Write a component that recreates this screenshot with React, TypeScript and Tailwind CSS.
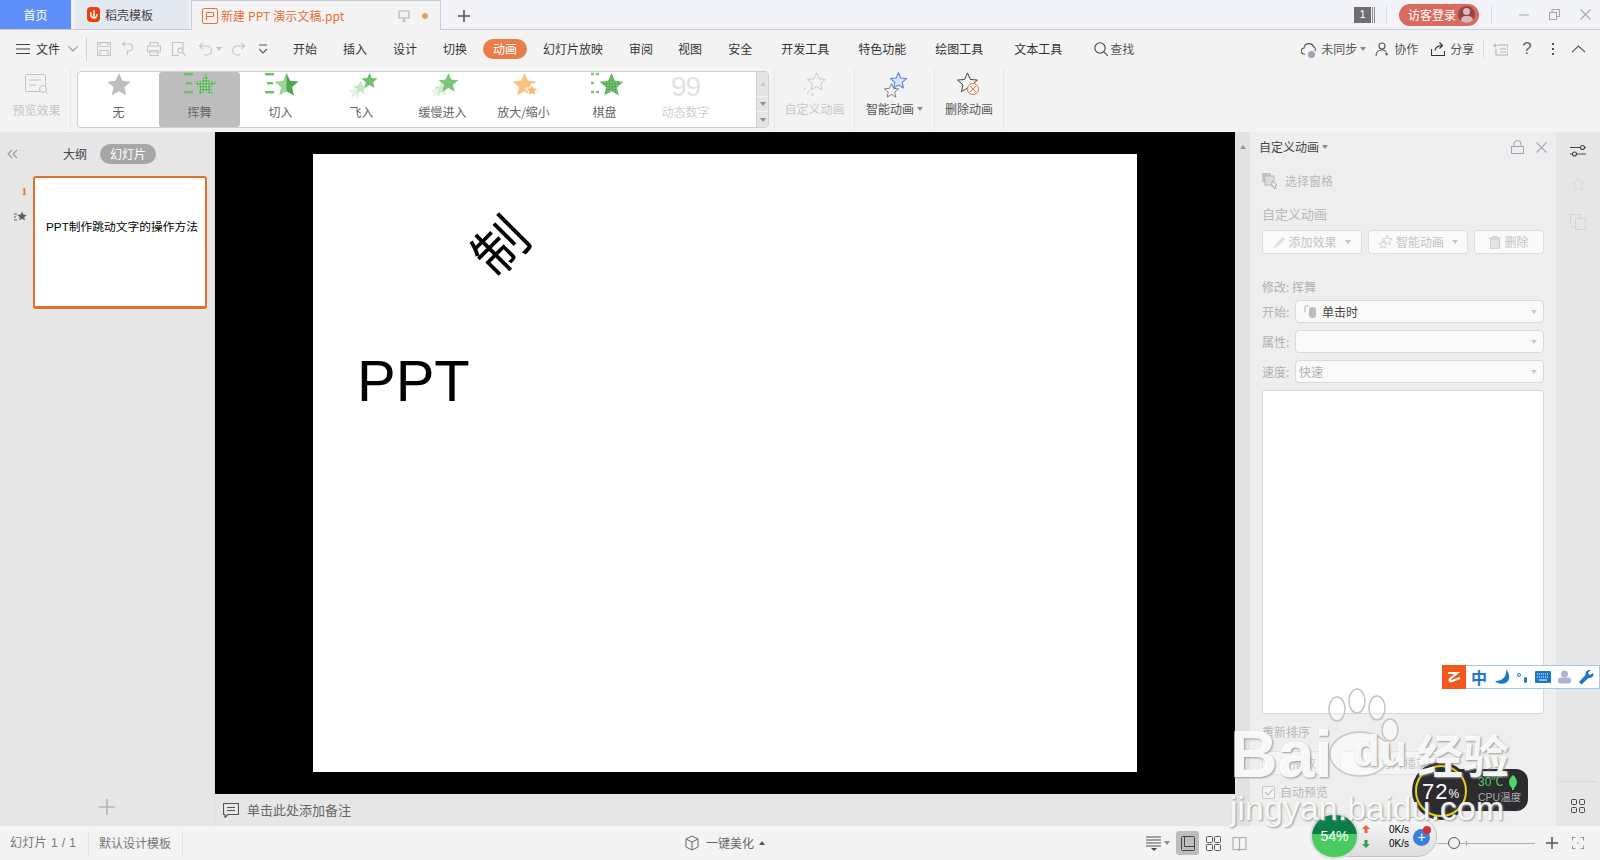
import React from "react";

const STAR = "12,1 15.3,8.5 23.4,9.3 17.2,14.6 19,22.6 12,18.4 5,22.6 6.8,14.6 .6,9.3 8.7,8.5";

function S({ x, y, s, fill, op = 1, stroke, sw = 1.2 }: { x: number; y: number; s: number; fill: string; op?: number; stroke?: string; sw?: number }) {
  return (
    <g transform={`translate(${x} ${y}) scale(${s / 24})`} opacity={op}>
      <polygon points={STAR} fill={fill} stroke={stroke} strokeWidth={stroke ? (sw * 24) / s : 0} strokeLinejoin="round" />
    </g>
  );
}

function Checks({ id, a, b }: { id: string; a: string; b: string }) {
  return (
    <defs>
      <pattern id={id} width="4" height="4" patternUnits="userSpaceOnUse" patternTransform="rotate(45)">
        <rect width="4" height="4" fill={a} />
        <rect width="2" height="2" fill={b} />
        <rect x="2" y="2" width="2" height="2" fill={b} />
      </pattern>
    </defs>
  );
}

function GalleryIcon({ kind }: { kind: string }) {
  const box = { width: 40, height: 30, viewBox: "0 2 40 30", className: "overflow-visible" };
  if (kind === "none") return <svg {...box}><S x={7.5} y={2} s={25} fill="#bdbdbd" /></svg>;
  if (kind === "wave")
    return (
      <svg {...box}>
        <Checks id="c1" a="#4fa84f" b="#a8d9a8" />
        <rect x="4" y="3" width="9" height="2.4" fill="#6cc06c" />
        <rect x="6" y="12" width="6" height="2.4" fill="#6cc06c" />
        <rect x="4" y="21" width="9" height="2.4" fill="#6cc06c" />
        <S x={13} y={2} s={25} fill="url(#c1)" />
      </svg>
    );
  if (kind === "cut")
    return (
      <svg {...box}>
        <rect x="4" y="3" width="9" height="2.4" fill="#6cc06c" />
        <rect x="6" y="12" width="6" height="2.4" fill="#6cc06c" />
        <rect x="4" y="21" width="9" height="2.4" fill="#6cc06c" />
        <S x={13} y={2} s={25} fill="#9bd69b" />
        <path d="M25.500 3 L29 10.700 37.400 11.500 31 17 32.800 25.500 25.500 21Z" fill="#4fa84f" />
      </svg>
    );
  if (kind === "fly")
    return (
      <svg {...box}>
        <S x={6} y={15} s={14} fill="#e4f3e4" />
        <S x={11} y={10} s={15} fill="#c6e7c6" />
        <S x={19} y={2} s={17} fill="#6fc06f" />
      </svg>
    );
  if (kind === "slow")
    return (
      <svg {...box}>
        <S x={7} y={15} s={13} fill="#e8f5e8" />
        <S x={11} y={11} s={15} fill="#d2ebd2" />
        <S x={15} y={2} s={21} fill="#7cc67c" />
      </svg>
    );
  if (kind === "zoom")
    return (
      <svg {...box}>
        <S x={8} y={2} s={25} fill="#fbc27f" />
        <S x={21} y={13} s={14} fill="#fcb86a" stroke="#fff" />
      </svg>
    );
  if (kind === "board")
    return (
      <svg {...box}>
        <Checks id="c2" a="#4da94d" b="#7cc67c" />
        <path d="M6 4h3M11 4h3M6 13h3M6 22h3M11 22h3" stroke="#7cc67c" strokeWidth="2.400" />
        <S x={14} y={2} s={25} fill="url(#c2)" />
      </svg>
    );
  return (
    <div className="w-[40px] h-[30px] flex items-center justify-center text-[#e3e3e3] text-[28px] leading-[30px] font-['Liberation_Sans',sans-serif] tracking-[-1px]">99</div>
  );
}

const galleryItems = [
  ["无", "none"],
  ["挥舞", "wave"],
  ["切入", "cut"],
  ["飞入", "fly"],
  ["缓慢进入", "slow"],
  ["放大/缩小", "zoom"],
  ["棋盘", "board"],
  ["动态数字", "num"],
];

function Line({ d, c = "#9a9a9a", w = 14, h = 14, sw = 1.1, vb = "0 0 14 14" }: { d: string; c?: string; w?: number; h?: number; sw?: number; vb?: string }) {
  return (
    <svg width={w} height={h} viewBox={vb} fill="none" stroke={c} strokeWidth={sw}>
      <path d={d} />
    </svg>
  );
}

function Caret({ up, c = "#8a8a8a" }: { up?: boolean; c?: string }) {
  return (
    <svg width="6" height="4" viewBox="0 0 6 4">
      <path d={up ? "M3 0L6 4H0Z" : "M0 0H6L3 4Z"} fill={c} />
    </svg>
  );
}

function TabBar() {
  return (
    <div className="h-[30px] shrink-0 flex bg-[#f1f3f8] border-b border-[#c9cbd9]">
      <div className="w-[71px] bg-[#6090fb] text-white text-[12px] flex items-center justify-center">首页</div>
      <div className="ml-[4px] w-[114px] bg-[#e4e8f1] text-[#444] text-[12px] flex items-center pl-[12px] gap-[5px]">
        <svg width="13" height="15" viewBox="0 0 13 15"><rect width="13" height="15" rx="4" fill="#f03d0c" /><path d="M4 5c-1 4 1 6 3 6 2 0 3-2 3-4M7 3v7" stroke="#fff" strokeWidth="1.500" fill="none" /></svg>
        <span>稻壳模板</span>
      </div>
      <div className="ml-[2px] w-[250px] h-[30px] bg-[#f3f3f3] border-x border-t border-[#c9cbd9] flex items-center pl-[10px] text-[#e8703a] text-[12px] relative">
        <svg width="16" height="16" viewBox="0 0 16 16" fill="none" stroke="#e8703a" strokeWidth="1"><rect x=".5" y=".5" width="15" height="15" rx="1.500" /><path d="M4.500 12V4.500h7v4h-7" /></svg>
        <span className="ml-[3px] whitespace-pre tracking-[0.1px]">新建 PPT 演示文稿.ppt</span>
        <span className="ml-auto mr-[12px] flex items-center gap-[11px]">
          <Line d="M2 2h10v7H2zM7 9v3M5 12h4" c="#b0b0b0" />
          <span className="w-[6px] h-[6px] rounded-full bg-[#e8a060]" />
        </span>
      </div>
      <svg className="ml-[17px] mt-[10px]" width="12" height="12" viewBox="0 0 12 12"><path d="M6 0v12M0 6h12" stroke="#555" strokeWidth="1.600" /></svg>
      <div className="ml-auto flex items-center">
        <div className="w-[17px] h-[16px] bg-[#6e6e6e] text-white text-[11px] flex items-center justify-center font-['Liberation_Sans',sans-serif]">1</div>
        <div className="ml-[1px] w-[3px] h-[16px] border-x border-[#8a8a8a]" />
        <div className="ml-[11px] w-px h-[18px] bg-[#dcdde3]" />
        <div className="ml-[12px] w-[80px] h-[22px] rounded-full bg-[#d96a5e] text-white text-[12px] flex items-center pl-[9px]">
          <span>访客登录</span>
          <span className="ml-[2px] w-[17px] h-[17px] rounded-full bg-[#94454a] relative overflow-hidden flex justify-center">
            <span className="absolute top-[2px] w-[7px] h-[7px] rounded-full bg-[#dcb8b8]" />
            <span className="absolute top-[10px] w-[12px] h-[9px] rounded-full bg-[#dcb8b8]" />
          </span>
        </div>
        <div className="ml-[12px] w-px h-[18px] bg-[#dcdde3]" />
        <div className="ml-[27px]"><Line d="M0 7h10" c="#a8a8a8" w={10} h={14} sw={1} vb="0 0 10 14" /></div>
        <div className="ml-[20px]"><Line d="M.5 3.500h7v7h-7zM3 3.500V.5h7.500v7H7.500" c="#a8a8a8" w={11} h={11} vb="0 0 11 11" /></div>
        <div className="ml-[20px] mr-[9px]"><Line d="M.5.5l10 10M10.500.5l-10 10" c="#a8a8a8" w={11} h={11} vb="0 0 11 11" /></div>
      </div>
    </div>
  );
}

function Tab({ t, cls }: { t: string; cls: string }) {
  return <span className={`text-[12px] text-[#333] whitespace-nowrap ${cls}`}>{t}</span>;
}

function MenuRow() {
  return (
    <div className="h-[37px] shrink-0 flex items-center pl-[16px] bg-[#f3f3f3]">
      <Line d="M0 2.500h14M0 7h14M0 11.500h14" c="#444" />
      <span className="ml-[6px] text-[12px] text-[#333]">文件</span>
      <span className="ml-[8px]"><Line d="M0 0l5 5 5-5" c="#999" w={10} h={6} vb="0 0 10 6" /></span>
      <span className="ml-[8px] w-px h-[24px] bg-[#d0d0d0]" />
      <span className="ml-[10px]"><Line d="M.5.5h13v13H.5zM3 .5v4h8v-4M3 13.500V8.500h8v5" c="#c4c4c4" /></span>
      <span className="ml-[11px]"><Line d="M0 2h7a3.500 3.500 0 010 7H5.500v4M3 0L.5 2 3 4" c="#c4c4c4" /></span>
      <span className="ml-[11px]"><Line d="M3 4V.5h8V4M.5 4h13v6h-13zM3 8.500h8v5H3z" c="#c4c4c4" /></span>
      <span className="ml-[11px]"><Line d="M11 8V.5H.5v13H7M8.500 6a2.500 2.500 0 100 5 2.500 2.500 0 000-5zM10.500 10.500L14 14" c="#c4c4c4" /></span>
      <span className="ml-[13px]"><Line d="M1 4h7a4.500 4.500 0 010 9H5M3.500 1L.5 4l3 3" c="#c4c4c4" /></span>
      <span className="ml-[3px]"><Caret c="#c4c4c4" /></span>
      <span className="ml-[9px]"><Line d="M13 4H6a4.500 4.500 0 000 9h3M10.500 1l3 3-3 3" c="#c4c4c4" /></span>
      <span className="ml-[14px]"><Line d="M0 1h8M0 5l4 4 4-4" c="#555" w={8} h={10} vb="0 0 8 10" /></span>
      <Tab t="开始" cls="ml-[26px]" />
      <Tab t="插入" cls="ml-[26px]" />
      <Tab t="设计" cls="ml-[26px]" />
      <Tab t="切换" cls="ml-[26px]" />
      <span className="ml-[16px] w-[44px] h-[20px] rounded-full bg-[#e87d4a] text-white text-[12px] flex items-center justify-center">动画</span>
      <Tab t="幻灯片放映" cls="ml-[16px]" />
      <Tab t="审阅" cls="ml-[26px]" />
      <Tab t="视图" cls="ml-[25px]" />
      <Tab t="安全" cls="ml-[26px]" />
      <Tab t="开发工具" cls="ml-[29px]" />
      <Tab t="特色功能" cls="ml-[29px]" />
      <Tab t="绘图工具" cls="ml-[29px]" />
      <Tab t="文本工具" cls="ml-[31px]" />
      <span className="ml-[32px]"><Line d="M6 .8a5.200 5.200 0 100 10.400A5.200 5.200 0 006 .8zM9.800 9.800L14 14" c="#444" /></span>
      <span className="ml-[2px] text-[12px] text-[#555]">查找</span>
      <span className="ml-[167px] relative">
        <Line d="M4 12H3.500a3 3 0 01-.5-6 5 5 0 019.500-1.500A3.500 3.500 0 0114 9" c="#555" w={16} h={14} vb="0 0 16 14" />
        <span className="absolute left-[7px] top-[9px] w-[7px] h-[7px] rounded-full bg-[#9aa5b5]" />
      </span>
      <span className="ml-[4px] text-[12px] text-[#555]">未同步</span>
      <span className="ml-[3px]"><Caret /></span>
      <span className="ml-[9px]"><Line d="M7 1a3 3 0 100 6 3 3 0 000-6zM1 14c0-4 2-6 6-6 2 0 3 .5 4 1.500M10 12h3M11.500 10.500v3" c="#555" /></span>
      <span className="ml-[5px] text-[12px] text-[#555]">协作</span>
      <span className="ml-[13px]"><Line d="M.5 7v6.500h13V9M4 8.500C5 5 8 3.500 11 3.500M8.500.5l3 3-3 3" c="#333" /></span>
      <span className="ml-[5px] text-[12px] text-[#555]">分享</span>
      <span className="ml-[9px] w-px h-[20px] bg-[#dcdcdc]" />
      <span className="ml-[9px]"><Line d="M0 3.500h4M2 1.500v4M5 3h10v10H3V7M7 7h6M7 10h6" c="#b0b0b0" w={15} h={14} vb="0 0 15 14" /></span>
      <span className="ml-[14px] text-[17px] leading-none text-[#666] font-['Liberation_Sans',sans-serif]">?</span>
      <span className="ml-[20px] flex flex-col gap-[3px]">
        <i className="block w-[2px] h-[2px] bg-[#555]" /><i className="block w-[2px] h-[2px] bg-[#555]" /><i className="block w-[2px] h-[2px] bg-[#555]" />
      </span>
      <span className="ml-[18px]"><Line d="M0 7l6.500-6L13 7" c="#555" w={13} h={8} vb="0 0 13 8" /></span>
    </div>
  );
}

function SmartStars() {
  return (
    <svg width="24" height="26" viewBox="0 0 24 26">
      <S x={1} y={11} s={15} fill="none" stroke="#777" sw={0.9} />
      <S x={7} y={0} s={17} fill="#dbe6fb" stroke="#5d86dd" sw={1.100} />
    </svg>
  );
}

function Ribbon() {
  return (
    <div className="h-[65px] shrink-0 bg-[#f3f3f3] flex items-stretch">
      <div className="w-[71px] pl-[3px] border-r border-[#e6e6e6] my-[2px] flex flex-col items-center">
        <svg className="mt-[5px]" width="24" height="22" viewBox="0 0 24 22" fill="none" stroke="#c2c2c2"><rect x=".5" y=".5" width="20" height="17" rx="1" /><path d="M4 6h12M4 11h7" /><circle cx="18" cy="15" r="3.500" fill="#f3f3f3" /><path d="M20.500 17.500L23 20" /></svg>
        <span className="mt-[5px] text-[12px] text-[#c4c4c4] whitespace-nowrap">预览效果</span>
      </div>
      <div className="ml-[6px] my-[4px] w-[692px] h-[57px] bg-white border border-[#cfcfcf] rounded-[4px] flex overflow-hidden">
        {galleryItems.map(([t, k]) => (
          <div key={t} className={`w-[81px] shrink-0 flex flex-col items-center rounded-[3px] ${k === "wave" ? "bg-[#bdbdbd]" : ""}`}>
            <GalleryIcon kind={k} />
            <span className={`mt-[1px] text-[12px] whitespace-nowrap ${k === "num" ? "text-[#cfcfcf]" : "text-[#666]"}`}>{t}</span>
          </div>
        ))}
        <div className="ml-auto w-[12px] bg-[#e4e4e4] border-l border-[#cfcfcf] flex flex-col items-center text-[#999]">
          <div className="h-[24px] flex items-center"><Caret up c="#c8c8c8" /></div>
          <div className="h-[16px] w-full border-y border-[#f3f3f3] flex items-center justify-center"><Caret /></div>
          <div className="h-[15px] flex items-center"><Caret /></div>
        </div>
      </div>
      <div className="ml-[5px] w-[81px] my-[2px] border-x border-[#e6e6e6] flex flex-col items-center">
        <svg className="mt-[3px]" width="24" height="26" viewBox="0 0 24 26" fill="none" stroke="#c8c8c8"><S x={4} y={0} s={19} fill="none" stroke="#c8c8c8" sw={1} /><path d="M2 16l-1 2M6 19l-2 3M10 21l-1 3" /></svg>
        <span className="mt-[2px] text-[12px] text-[#c8c8c8] whitespace-nowrap">自定义动画</span>
      </div>
      <div className="w-[80px] my-[2px] border-r border-[#e6e6e6] flex flex-col items-center">
        <div className="mt-[3px]"><SmartStars /></div>
        <span className="mt-[2px] text-[12px] text-[#555] flex items-center gap-[3px] whitespace-nowrap">智能动画<Caret /></span>
      </div>
      <div className="w-[69px] my-[2px] border-r border-[#e6e6e6] flex flex-col items-center">
        <svg className="mt-[3px]" width="24" height="26" viewBox="0 0 24 26" fill="none"><S x={0} y={0} s={21} fill="none" stroke="#444" sw={1} /><circle cx="16" cy="17" r="5.500" fill="#f3f3f3" stroke="#d97b4a" /><path d="M13 14l6 6M19 14l-6 6" stroke="#d97b4a" /></svg>
        <span className="mt-[2px] text-[12px] text-[#555] whitespace-nowrap">删除动画</span>
      </div>
    </div>
  );
}

function LeftPanel() {
  return (
    <div className="w-[215px] shrink-0 bg-[#e6e6e6] flex flex-col border-r border-[#dcdcdc]">
      <div className="h-[43px] shrink-0 flex items-center pl-[7px]">
        <Line d="M5 1L1 5l4 4M10 1L6 5l4 4" c="#999" w={11} h={10} vb="0 0 11 10" />
        <span className="ml-[45px] text-[12px] text-[#444]">大纲</span>
        <span className="ml-[13px] w-[56px] h-[20px] rounded-full bg-[#a6a6a6] text-white text-[12px] flex items-center justify-center">幻灯片</span>
      </div>
      <div className="flex pt-[1px]">
        <div className="w-[33px] shrink-0 flex flex-col items-end pr-[6px]">
          <span className="text-[11px] font-bold text-[#e0702f] mt-[7px] font-['Liberation_Serif',serif]">1</span>
          <svg className="mt-[11px]" width="13" height="11" viewBox="0 0 13 11"><g transform="translate(3 0) scale(.42)"><polygon points={STAR} fill="#5a6068" /></g><path d="M0 3h3M0 6h2M0 9h3" stroke="#5a6068" /></svg>
        </div>
        <div className="w-[174px] h-[133px] border-[2px] border-[#e0702f] rounded-[3px] bg-white pt-[40px] pl-[11px] border-b-[3px] whitespace-nowrap text-[11.750px] font-normal text-black font-['Liberation_Sans','Noto_Sans_CJK_SC',sans-serif]">PPT制作跳动文字的操作方法</div>
      </div>
      <div className="mt-auto mb-[4px] h-[31px] flex items-center justify-center">
        <svg width="16" height="16" viewBox="0 0 16 16"><path d="M8 0v16M0 8h16" stroke="#b5b5b5" strokeWidth="1.500" /></svg>
      </div>
    </div>
  );
}

function Center() {
  return (
    <div className="w-[1020px] shrink-0 flex flex-col">
      <div className="flex-1 bg-black flex items-center justify-center">
        <div className="w-[824px] h-[618px] bg-white relative">
          <div className="absolute left-[44px] top-[192px] text-[58px] leading-[70px] text-black font-['Liberation_Sans',sans-serif]">PPT</div>
          <div className="absolute left-[155px] top-[55px] w-[60px] h-[70px] flex items-center justify-center -rotate-45 text-[54px] leading-none text-black font-['Noto_Sans_CJK_SC',sans-serif]">制</div>
        </div>
      </div>
      <div className="h-[32px] shrink-0 bg-[#e6e6e6] flex items-center pl-[8px]">
        <Line d="M.5.5h15v11H5l-3 3v-3H.5zM4 4.500h8M4 7.500h8" c="#555" w={16} h={15} vb="0 0 16 15" />
        <span className="ml-[8px] text-[13px] text-[#666]">单击此处添加备注</span>
      </div>
    </div>
  );
}

function PaneBtn({ w, icon, t, caret }: { w: string; icon: React.ReactNode; t: string; caret?: boolean }) {
  return (
    <div className={`${w} h-[24px] bg-[#f9f9f9] border border-[#dedede] rounded-[3px] flex items-center justify-center gap-[2px] text-[12px] text-[#c4c4c4] relative`}>
      {icon}
      <span>{t}</span>
      {caret && <span className="ml-[6px]"><Caret c="#c4c4c4" /></span>}
    </div>
  );
}

function Field({ label, children, mt }: { label: string; children?: React.ReactNode; mt: string }) {
  return (
    <div className={`flex items-center ${mt}`}>
      <span className="w-[33px] text-[12px] text-[#b0b0b0] whitespace-nowrap">{label}:</span>
      <div className="w-[249px] h-[23px] bg-[#f9f9f9] border border-[#d9d9d9] rounded-[4px] flex items-center pl-[3px] pr-[6px] text-[12px]">
        {children}
        <span className="ml-auto"><Caret c="#c8c8c8" /></span>
      </div>
    </div>
  );
}

function RightPane() {
  return (
    <div className="flex-1 flex min-w-0">
      <div className="w-[15px] shrink-0 bg-[#e2e2e2] flex justify-center pt-[13px]"><Caret up c="#999" /></div>
      <div className="w-[306px] shrink-0 bg-[#eeeeee] pl-[12px] flex flex-col">
        <div className="h-[30px] flex items-center -ml-[3px]">
          <span className="text-[12px] text-[#444]">自定义动画</span>
          <span className="ml-[3px]"><Caret /></span>
          <span className="ml-[183px]"><svg width="13" height="15" viewBox="0 0 13 15" fill="none" stroke="#9aa3ba"><rect x=".5" y="6.500" width="12" height="7" /><path d="M3 6.500V4a3.500 3.500 0 017 0v2.500" /></svg></span>
          <span className="ml-[12px]"><Line d="M.5.5l10 10M10.500.5l-10 10" c="#a3a9ba" w={11} h={11} vb="0 0 11 11" /></span>
        </div>
        <div className="mt-[10px] h-[18px] flex items-center text-[12px] text-[#b8b8b8]">
          <svg width="16" height="16" viewBox="0 0 16 16"><rect width="9" height="9" fill="#c4c4c4" /><rect x="3" y="3" width="9" height="9" fill="#ddd" stroke="#b8b8b8" /><path d="M10 8l5 4-2 .5 1 3-1.500.5-1-3-1.500 1z" fill="#fff" stroke="#aaa" /></svg>
          <span className="ml-[7px]">选择窗格</span>
        </div>
        <div className="mt-[15px] text-[13px] leading-[18px] text-[#b8b8b8]">自定义动画</div>
        <div className="mt-[7px] flex gap-[6px]">
          <PaneBtn w="w-[100px]" t="添加效果" caret icon={<svg width="13" height="13" viewBox="0 0 13 13"><path d="M1 12l2-4 7-7 2 2-7 7z" fill="#dedede" /></svg>} />
          <PaneBtn w="w-[100px]" t="智能动画" caret icon={<svg width="16" height="16" viewBox="0 0 24 24"><S x={6} y={1} s={16} fill="#f9f9f9" stroke="#ccc" /><S x={1} y={9} s={13} fill="#f9f9f9" stroke="#ccc" /></svg>} />
          <PaneBtn w="w-[70px]" t="删除" icon={<svg className="mr-[1px]" width="12" height="13" viewBox="0 0 12 13"><path d="M0 2h12M4 2V.5h4V2M1.500 3h9v10h-9z" stroke="#ccc" fill="#e4e4e4" /></svg>} />
        </div>
        <div className="mt-[24px] text-[12px] leading-[18px] text-[#b0b0b0]">修改: 挥舞</div>
        <Field label="开始" mt="mt-[4px]">
          <svg className="ml-[5px]" width="13" height="15" viewBox="0 0 13 15"><path d="M1 8V3a1.500 1.500 0 013 0" fill="none" stroke="#b0b0b0" /><rect x="5" y="3" width="7" height="11" rx="3" fill="#bdbdbd" /></svg>
          <span className="ml-[5px] text-[#444]">单击时</span>
        </Field>
        <Field label="属性" mt="mt-[7px]" />
        <Field label="速度" mt="mt-[7px]"><span className="text-[#b0b0b0]">快速</span></Field>
        <div className="mt-[7px] w-[282px] h-[324px] shrink-0 bg-white border border-[#d9d9d9] rounded-[3px]" />
        <div className="mt-[9px] text-[12px] leading-[18px] text-[#b8b8b8]">重新排序</div>
        <div className="mt-[10px] flex gap-[10px] text-[12px] text-[#c8c8c8]">
          <div className="w-[68px] h-[24px] border border-[#e2e2e2] rounded-[3px] bg-[#f4f4f4] pl-[29px] flex items-center">播放</div>
          <div className="w-[100px] h-[24px] border border-[#e2e2e2] rounded-[3px] bg-[#f4f4f4] pl-[27px] flex items-center whitespace-nowrap">幻灯片播放</div>
        </div>
        <div className="mt-[8px] flex items-center text-[12px] text-[#b8b8b8]">
          <span className="w-[13px] h-[13px] border border-[#c8c8c8] rounded-[2px] bg-[#f4f4f4] flex items-center justify-center"><Line d="M1 5l3 3 5-6" c="#bbb" w={10} h={10} vb="0 0 10 10" /></span>
          <span className="ml-[5px]">自动预览</span>
        </div>
      </div>
      <div className="flex-1 bg-[#e6e6e6] flex flex-col items-center">
        <div className="mt-[11px]"><Line d="M0 4.500h11M14 4.500h2M0 11h3M6 11h10M12.500 2.500a2 2 0 100 4 2 2 0 000-4zM4.500 9a2 2 0 100 4 2 2 0 000-4z" c="#444" w={16} h={15} vb="0 0 16 15" /></div>
        <svg className="mt-[19px]" width="16" height="18" viewBox="0 0 24 26"><S x={2} y={0} s={21} fill="none" stroke="#d6d6d6" sw={1.300} /><path d="M2 20l-1 2M7 21l-1 3M12 21l-1 3" stroke="#d6d6d6" /></svg>
        <svg className="mt-[19px]" width="16" height="16" viewBox="0 0 16 16" fill="none" stroke="#d4d4d4"><path d="M.5 10V.5h10V4M5.500 4.500h10v11h-10zM1 13h7" /></svg>
        <div className="mt-auto w-[38px] border-t border-[#d8d8d8] pt-[17px] pb-[13px] flex justify-center">
          <svg width="14" height="14" viewBox="0 0 14 14" fill="none" stroke="#444"><rect x=".5" y=".5" width="5" height="5" rx="1" /><rect x="8.500" y=".5" width="5" height="5" rx="1" /><rect x=".5" y="8.500" width="5" height="5" rx="1" /><rect x="8.500" y="8.500" width="5" height="5" rx="1" /></svg>
        </div>
      </div>
    </div>
  );
}

function StatusBar() {
  return (
    <div className="h-[34px] shrink-0 bg-[#f3f3f3] flex items-center pl-[10px] text-[12px] text-[#777]">
      <span className="w-[67px] whitespace-pre tracking-[0.4px] font-['Liberation_Sans','Noto_Sans_CJK_SC',sans-serif]">幻灯片 1 / 1</span>
      <span className="ml-[11px] w-px h-[24px] bg-[#e2e2e2]" />
      <span className="ml-[10px]">默认设计模板</span>
      <span className="ml-[11px] w-px h-[24px] bg-[#e2e2e2]" />
      <span className="ml-[501px]"><svg width="16" height="16" viewBox="0 0 14 16" fill="none" stroke="#666"><path d="M1 4l6-3 6 3v8l-6 3-6-3zM1 4l6 3 6-3M7 7v8" /></svg></span>
      <span className="ml-[6px] text-[#666]">一键美化</span>
      <span className="ml-[5px]"><Caret up c="#555" /></span>
      <span className="ml-[381px]"><svg width="15" height="16" viewBox="0 0 15 16"><path d="M0 2h15M0 5h15M0 8h15M0 11h15" stroke="#555" /><path d="M5 13h6l-3 3z" fill="#444" /></svg></span>
      <span className="ml-[3px]"><Caret /></span>
      <span className="ml-[6px] w-[23px] h-[24px] bg-[#bdbdbd] rounded-[3px] flex items-center justify-center">
        <svg width="14" height="15" viewBox="0 0 14 15" fill="none" stroke="#444"><rect x=".5" y=".5" width="13" height="14" rx="1" /><path d="M3.500.5v10h10" /></svg>
      </span>
      <span className="ml-[7px]"><svg width="15" height="15" viewBox="0 0 15 15" fill="none" stroke="#555"><rect x=".5" y=".5" width="6" height="6" rx="1" /><rect x="8.500" y=".5" width="6" height="6" rx="1" /><rect x=".5" y="8.500" width="6" height="6" rx="1" /><rect x="8.500" y="8.500" width="6" height="6" rx="1" /></svg></span>
      <span className="ml-[11px]"><Line d="M.5 1.500h5.500l1 1 1-1h5.500v12H8l-1 1-1-1H.5zM7 2.500v11" c="#aaa" w={15} h={15} vb="0 0 14 15" /></span>
      <span className="ml-[190px] flex items-center w-[98px] h-px bg-[#b0b0b0] relative">
        <span className="absolute left-[11px] w-[12px] h-[12px] rounded-full border border-[#555] bg-[#f3f3f3]" />
        <span className="absolute left-[29px] w-px h-[5px] bg-[#aaa]" />
      </span>
      <span className="ml-[11px]"><svg width="12" height="12" viewBox="0 0 12 12"><path d="M6 0v12M0 6h12" stroke="#555" strokeWidth="1.500" /></svg></span>
      <span className="ml-[14px]"><Line d="M0 3.500V0h3.500M8.500 0H12v3.500M12 8.500V12H8.500M3.500 12H0V8.500M5.500 6h1" c="#555" w={12} h={12} vb="0 0 12 12" /></span>
    </div>
  );
}

function Overlays() {
  return (
    <>
      <div className="absolute left-[1442px] top-[665px] w-[158px] h-[24px] bg-white border border-[#a9c7ee] flex items-center">
        <div className="w-[24px] h-[24px] -ml-px bg-[#f4561e] flex items-center justify-center">
          <svg width="16" height="14" viewBox="0 0 16 14" fill="none" stroke="#fff" strokeWidth="2.200"><path d="M2 3h9L4 9c-1 1 0 3 2 2l8-3" /></svg>
        </div>
        <span className="ml-[5px] text-[16px] font-bold leading-none text-[#1d78c8]">中</span>
        <svg className="ml-[8px]" width="15" height="15" viewBox="0 0 15 15"><path d="M11 0c1 6-3 11-11 11 3 4 12 4 14-2 1-4-1-8-3-9z" fill="#1d78c8" /></svg>
        <span className="ml-[7px] flex items-start"><i className="block w-[4px] h-[4px] mt-[1px] rounded-full border border-[#1d78c8]" /><i className="block ml-[3px] mt-[5px] w-[3px] h-[6px] rounded-full bg-[#1d78c8]" /></span>
        <svg className="ml-[8px]" width="16" height="12" viewBox="0 0 16 12"><rect width="16" height="12" rx="1" fill="#1d78c8" /><path d="M2 3h12M2 6h12" stroke="#fff" strokeDasharray="1 1" /><path d="M4 9h8" stroke="#fff" /></svg>
        <svg className="ml-[7px]" width="13" height="14" viewBox="0 0 13 14" fill="#a9b6c8"><circle cx="6.500" cy="4" r="3.500" /><rect y="7.500" width="13" height="6" rx="2.500" /></svg>
        <svg className="ml-[8px]" width="15" height="15" viewBox="0 0 15 15"><path d="M14 3l-3 2-1.500-1L9.500 2 12 .5C9-1 6 1.500 6.500 5L0 12l2.500 2.500 7-6.500c3 .5 6-2 4.500-5z" fill="#1d78c8" /></svg>
      </div>

      <div className="absolute left-[1440px] top-[769px] w-[88px] h-[42px] rounded-r-[12px] bg-[#2c2c30] pl-[38px] font-['Liberation_Sans','Noto_Sans_CJK_SC',sans-serif]">
        <div className="mt-[5px] flex items-center gap-[5px] text-[12px] leading-[16px] text-[#4bd964]">30℃
          <svg width="10" height="15" viewBox="0 0 10 15"><path d="M5 0c4 3 6 9 1 13v2H4v-2C-1 9 1 3 5 0z" fill="#4bd964" /></svg>
        </div>
        <div className="text-[10.500px] leading-[14px] text-[#a8a8a8] whitespace-nowrap">CPU温度</div>
      </div>
      <div className="absolute left-[1412px] top-[762px] w-[58px] h-[58px] rounded-full bg-[#2c2c30] flex items-center justify-center">
        <div className="w-[52px] h-[52px] rounded-full border-[2px] border-[#e5d21a] flex items-center justify-center text-white font-['Liberation_Sans',sans-serif] text-[22px] tracking-[1px]">72<span className="text-[12px] mt-[5px]">%</span></div>
      </div>

      <div className="absolute left-[1340px] top-[817px] w-[97px] h-[40px] rounded-r-full bg-gradient-to-b from-[#f8f8f8] to-[#dcdcdc] border border-[#c4c4c4] font-['Liberation_Sans',sans-serif] text-[10px] text-black">
        <svg className="absolute left-[21px] top-[7px]" width="8" height="8" viewBox="0 0 8 8"><path d="M4 0l4 4H5.500v4h-3V4H0z" fill="#e0673f" /></svg>
        <svg className="absolute left-[21px] top-[22px]" width="8" height="8" viewBox="0 0 8 8"><path d="M4 8L0 4h2.500V0h3v4H8z" fill="#2e9e4f" /></svg>
        <span className="absolute left-[48px] top-[5px] leading-[14px]">0K/s</span>
        <span className="absolute left-[48px] top-[19px] leading-[14px]">0K/s</span>
        <span className="absolute left-[72px] top-[11px] w-[17px] h-[17px] rounded-full bg-[#3c7fd9] text-white text-[14px] leading-[16px] text-center">+</span>
        <span className="absolute left-[82px] top-[8px] w-[8px] h-[8px] rounded-full bg-[#d83030]" />
      </div>
      <div className="absolute left-[1310px] top-[813px] w-[49px] h-[46px] rounded-full border-[2px] border-[#dcdcdc] bg-[linear-gradient(#0d7d4a_0%,#0d7d4a_45%,#4acb60_45%,#4acb60_100%)] flex items-center justify-center text-white text-[14px] font-['Liberation_Sans',sans-serif]">54%</div>

      <div className="absolute left-[1225px] top-[690px] w-[300px] h-[140px] pointer-events-none font-['Liberation_Sans',sans-serif] text-[rgba(255,255,255,0.92)] [text-shadow:1px_1px_2px_#999]">
        <svg className="absolute left-[95px] top-[-2px]" width="85" height="90" viewBox="0 0 85 90" fill="rgba(255,255,255,0.45)" stroke="#c4c4c4" strokeWidth="1.500">
          <ellipse cx="17" cy="21" rx="8" ry="12" />
          <ellipse cx="37" cy="13" rx="8" ry="12" />
          <ellipse cx="57" cy="20" rx="8" ry="12" />
          <ellipse cx="70" cy="42" rx="8" ry="11" />
          <ellipse cx="40" cy="66" rx="30" ry="22" />
        </svg>
        <span className="absolute left-[5px] top-[26px] text-[66px] leading-[76px] font-bold">Bai</span>
        <span className="absolute left-[128px] top-[31px] text-[44px] leading-[60px] font-bold">du</span>
        <span className="absolute left-[192px] top-[38px] text-[46px] leading-[50px] font-bold font-['Noto_Sans_CJK_SC',sans-serif]">经验</span>
        <span className="absolute left-[5px] top-[98px] text-[34px] leading-[40px] whitespace-nowrap">jingyan.baidu.com</span>
      </div>
    </>
  );
}

export default function App() {
  return (
    <div className="relative w-[1600px] h-[860px] overflow-hidden flex flex-col font-['Noto_Sans_CJK_SC','Liberation_Sans',sans-serif] bg-[#f3f3f3]">
      <TabBar />
      <MenuRow />
      <Ribbon />
      <div className="flex-1 flex min-h-0">
        <LeftPanel />
        <Center />
        <RightPane />
      </div>
      <StatusBar />
      <Overlays />
    </div>
  );
}
